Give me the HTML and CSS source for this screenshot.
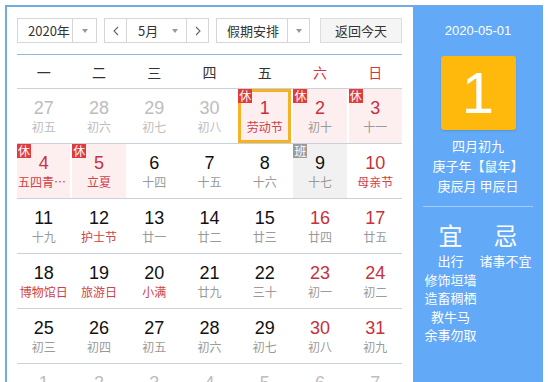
FILE: index.html
```html
<!DOCTYPE html>
<html lang="zh-CN">
<head>
<meta charset="utf-8">
<title>万年历</title>
<link rel="stylesheet" href="styles.css">
</head>
<body>
<div class="widget">
  <div class="main">
    <div class="toolbar">
      <div class="sel year"><span class="txt">2020年</span><span class="drop"><i class="tri"></i></span></div>
      <div class="mgroup">
        <span class="nav"><svg width="6" height="10" viewBox="0 0 6 10"><path d="M5 1 L1 5 L5 9" fill="none" stroke="#666" stroke-width="1.1"/></svg></span>
        <span class="msel"><span class="txt">5月</span><span class="mdrop"><i class="tri"></i></span></span>
        <span class="nav"><svg width="6" height="10" viewBox="0 0 6 10"><path d="M1 1 L5 5 L1 9" fill="none" stroke="#666" stroke-width="1.1"/></svg></span>
      </div>
      <div class="sel holiday"><span class="txt">假期安排</span><span class="drop"><i class="tri"></i></span></div>
      <div class="btn">返回今天</div>
    </div>
    <div class="bluebar"></div>
    <div class="weekhead">
      <span>一</span><span>二</span><span>三</span><span>四</span><span>五</span><span class="we">六</span><span class="we">日</span>
    </div>
    <div class="week">
      <div class="cell other"><div class="num">27</div><div class="lunar">初五</div></div>
      <div class="cell other"><div class="num">28</div><div class="lunar">初六</div></div>
      <div class="cell other"><div class="num">29</div><div class="lunar">初七</div></div>
      <div class="cell other"><div class="num">30</div><div class="lunar">初八</div></div>
      <div class="cell rest today"><span class="badge">休</span><div class="num">1</div><div class="lunar fest">劳动节</div></div>
      <div class="cell rest"><span class="badge">休</span><div class="num">2</div><div class="lunar">初十</div></div>
      <div class="cell rest"><span class="badge">休</span><div class="num">3</div><div class="lunar">十一</div></div>
    </div>
    <div class="week">
      <div class="cell rest"><span class="badge">休</span><div class="num">4</div><div class="lunar fest">五四青年节</div></div>
      <div class="cell rest"><span class="badge">休</span><div class="num">5</div><div class="lunar fest">立夏</div></div>
      <div class="cell"><div class="num">6</div><div class="lunar">十四</div></div>
      <div class="cell"><div class="num">7</div><div class="lunar">十五</div></div>
      <div class="cell"><div class="num">8</div><div class="lunar">十六</div></div>
      <div class="cell work"><span class="badge grey">班</span><div class="num">9</div><div class="lunar">十七</div></div>
      <div class="cell wkend"><div class="num">10</div><div class="lunar fest">母亲节</div></div>
    </div>
    <div class="week">
      <div class="cell"><div class="num">11</div><div class="lunar">十九</div></div>
      <div class="cell"><div class="num">12</div><div class="lunar fest">护士节</div></div>
      <div class="cell"><div class="num">13</div><div class="lunar">廿一</div></div>
      <div class="cell"><div class="num">14</div><div class="lunar">廿二</div></div>
      <div class="cell"><div class="num">15</div><div class="lunar">廿三</div></div>
      <div class="cell wkend"><div class="num">16</div><div class="lunar">廿四</div></div>
      <div class="cell wkend"><div class="num">17</div><div class="lunar">廿五</div></div>
    </div>
    <div class="week">
      <div class="cell"><div class="num">18</div><div class="lunar fest">博物馆日</div></div>
      <div class="cell"><div class="num">19</div><div class="lunar fest">旅游日</div></div>
      <div class="cell"><div class="num">20</div><div class="lunar fest">小满</div></div>
      <div class="cell"><div class="num">21</div><div class="lunar">廿九</div></div>
      <div class="cell"><div class="num">22</div><div class="lunar">三十</div></div>
      <div class="cell wkend"><div class="num">23</div><div class="lunar">初一</div></div>
      <div class="cell wkend"><div class="num">24</div><div class="lunar">初二</div></div>
    </div>
    <div class="week">
      <div class="cell"><div class="num">25</div><div class="lunar">初三</div></div>
      <div class="cell"><div class="num">26</div><div class="lunar">初四</div></div>
      <div class="cell"><div class="num">27</div><div class="lunar">初五</div></div>
      <div class="cell"><div class="num">28</div><div class="lunar">初六</div></div>
      <div class="cell"><div class="num">29</div><div class="lunar">初七</div></div>
      <div class="cell wkend"><div class="num">30</div><div class="lunar">初八</div></div>
      <div class="cell wkend"><div class="num">31</div><div class="lunar">初九</div></div>
    </div>
    <div class="week">
      <div class="cell other"><div class="num">1</div><div class="lunar">初十</div></div>
      <div class="cell other"><div class="num">2</div><div class="lunar">十一</div></div>
      <div class="cell other"><div class="num">3</div><div class="lunar">十二</div></div>
      <div class="cell other"><div class="num">4</div><div class="lunar">十三</div></div>
      <div class="cell other"><div class="num">5</div><div class="lunar">十四</div></div>
      <div class="cell other"><div class="num">6</div><div class="lunar">十五</div></div>
      <div class="cell other"><div class="num">7</div><div class="lunar">十六</div></div>
    </div>
  </div>
  <div class="panel">
    <div class="pdate">2020-05-01</div>
    <div class="bigday">1</div>
    <div class="pinfo">
      <div>四月初九</div>
      <div>庚子年【鼠年】</div>
      <div>庚辰月 甲辰日</div>
    </div>
    <div class="psep"></div>
    <div class="yiji">
      <div class="col">
        <div class="ttl">宜</div>
        <div>出行</div>
        <div>修饰垣墙</div>
        <div>造畜稠栖</div>
        <div>教牛马</div>
        <div>余事勿取</div>
      </div>
      <div class="col">
        <div class="ttl">忌</div>
        <div>诸事不宜</div>
      </div>
    </div>
  </div>
</div>
</body>
</html>
```
FILE: styles.css
```css
html, body {
  margin: 0;
  padding: 0;
  background: #fff;
}
body {
  width: 548px;
  height: 382px;
  overflow: hidden;
  font-family: "Noto Sans CJK SC", "Microsoft YaHei", sans-serif;
  color: #333;
}
.widget {
  display: flex;
  margin: 5px 0 0 5px;
  width: 538px;
  height: 420px;
  box-sizing: border-box;
  border-top: 2px solid #72abe3;
  border-left: 2px solid #72abe3;
}
.main {
  width: 406px;
  flex: none;
  padding: 11px 11px 0 10px;
  box-sizing: border-box;
}
.toolbar {
  display: flex;
  height: 25px;
  font-size: 13px;
  line-height: 23px;
  color: #333;
}
.sel, .mgroup, .btn {
  display: flex;
  height: 25px;
  box-sizing: border-box;
  border: 1px solid #d6d6d6;
  background: #fff;
}
.sel .txt {
  padding-left: 10px;
  box-sizing: border-box;
}
.year { width: 80px; }
.year .txt { width: 54px; }
.drop {
  display: flex;
  align-items: center;
  justify-content: center;
  border-left: 1px solid #d6d6d6;
  flex: 1;
}
.tri {
  display: block;
  width: 0;
  height: 0;
  border-left: 3.5px solid transparent;
  border-right: 3.5px solid transparent;
  border-top: 4px solid #999;
}
.mgroup {
  width: 105px;
  margin-left: 7px;
}
.nav {
  width: 21px;
  display: flex;
  align-items: center;
  justify-content: center;
}
.msel {
  display: flex;
  width: 59px;
  border-left: 1px solid #d6d6d6;
  border-right: 1px solid #d6d6d6;
}
.msel .txt {
  padding-left: 11px;
  flex: 1;
}
.mdrop {
  width: 22px;
  display: flex;
  align-items: center;
  justify-content: center;
}
.holiday {
  width: 94px;
  margin-left: 7px;
}
.holiday .txt { width: 70px; }
.btn {
  width: 82px;
  margin-left: 10px;
  justify-content: center;
  background: #f5f5f5;
  border-color: #dddddd;
}
.bluebar {
  height: 1px;
  margin-top: 11px;
  background: #8fb9e0;
}
.weekhead {
  display: grid;
  grid-template-columns: repeat(7, 1fr);
  column-gap: 2px;
  height: 33px;
  align-items: center;
  text-align: center;
  font-size: 14px;
  color: #333;
  border-bottom: 1px solid #c9d1da;
}
.weekhead .we { color: #d8353e; }
.week {
  display: grid;
  grid-template-columns: repeat(7, 1fr);
  column-gap: 2px;
  height: 55px;
  box-sizing: border-box;
  border-bottom: 1px solid #c9d1da;
}
.cell {
  position: relative;
  min-width: 0;
  height: 54px;
  box-sizing: border-box;
  padding: 9px 1px 0;
  text-align: center;
}
.num {
  font-family: "Liberation Sans", Arial, sans-serif;
  font-size: 18px;
  line-height: 20px;
  color: #111;
}
.lunar {
  font-size: 12px;
  line-height: 18px;
  color: #9a9a9a;
  white-space: nowrap;
  overflow: hidden;
  text-overflow: ellipsis;
}
.lunar.fest { color: #cf4148; }
.wkend .num, .rest .num { color: #c8313b; }
.rest { background: #fdefef; }
.work { background: #f1f1f1; }
.other .num { color: #bdbdbd; }
.other .lunar { color: #bdbdbd; }
.today {
  border: 3px solid #f3b324;
  padding-top: 6px;
}
.badge {
  position: absolute;
  left: 0;
  top: 0;
  width: 14px;
  height: 14px;
  line-height: 14px;
  font-size: 12px;
  color: #fff;
  background: #e13b3b;
  text-align: center;
  z-index: 1;
}
.today .badge { left: -3px; top: -3px; }
.badge.grey { background: #9b9b9b; }
.panel {
  width: 130px;
  flex: none;
  margin-top: -1px;
  background: #62a9f7;
  color: #fff;
  text-align: center;
  padding-top: 16px;
  box-sizing: border-box;
}
.pdate {
  font-family: "Liberation Sans", Arial, sans-serif;
  font-size: 13px;
  line-height: 18px;
}
.bigday {
  width: 75px;
  height: 74px;
  margin: 16px auto 0;
  background: #ffb80c;
  border-radius: 3px;
  font-family: "Liberation Sans", Arial, sans-serif;
  font-size: 58px;
  line-height: 74px;
  box-shadow: 0 1px 2px rgba(0,0,0,0.12);
}
.pinfo {
  margin-top: 6px;
  font-size: 13px;
  line-height: 20px;
}
.psep {
  height: 1px;
  margin: 10px 10px 0;
  background: rgba(255,255,255,0.4);
}
.yiji {
  display: grid;
  grid-template-columns: 55px 55px;
  margin: 13px 10px 0;
  font-size: 13px;
  line-height: 18.5px;
}
.yiji .ttl {
  font-size: 24px;
  line-height: 30px;
  margin-bottom: 2px;
}
```
